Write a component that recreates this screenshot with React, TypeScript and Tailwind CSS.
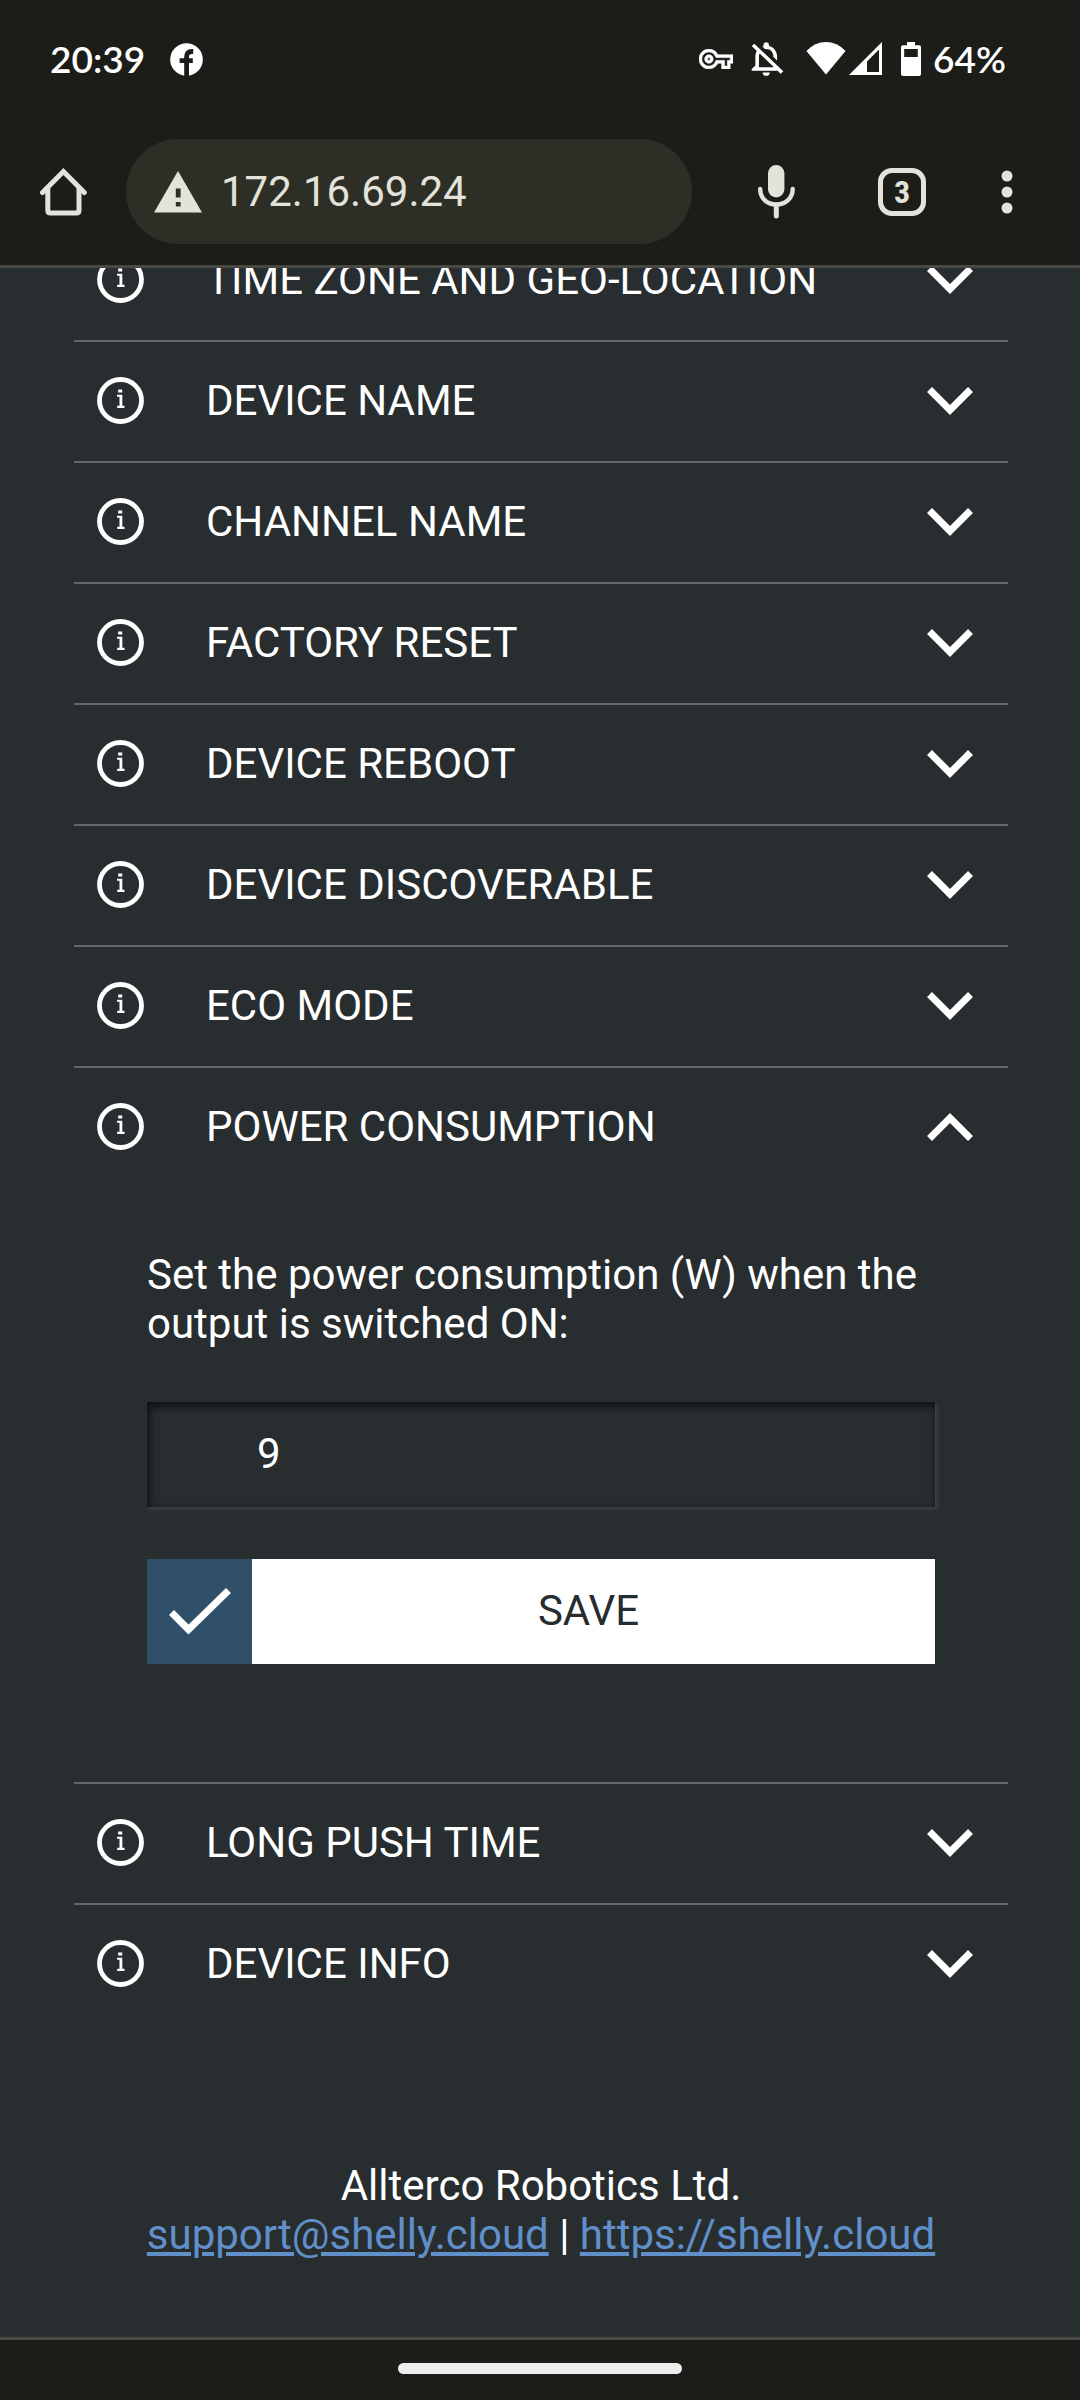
import { useState } from 'react';

function FacebookIcon() {
  return (
    <svg className="h-[33px] w-[33px]" viewBox="0 0 33 33" aria-hidden="true">
      <circle cx="16.5" cy="16.5" r="16.3" fill="#fff" />
      <path d="M16.6 33V13.6q0-5.1 5.2-5.1h1.4M9.6 17.7h13.2" fill="none" stroke="#1c1d18" strokeWidth="4.8" />
    </svg>
  );
}

function KeyIcon() {
  return (
    <svg className="h-5 w-[34px]" viewBox="0 5 24 14" fill="#fff" aria-hidden="true">
      <path d="M22 19h-6v-4h-2.680c-1.140 2.420-3.600 4-6.320 4-3.860 0-7-3.140-7-7s3.140-7 7-7c2.720 0 5.170 1.580 6.320 4H24v6h-2v4zm-4-2h2v-4h2v-2H11.940l-.23-.67C11.010 8.340 9.110 7 7 7c-2.760 0-5 2.240-5 5s2.240 5 5 5c2.110 0 4.010-1.340 4.710-3.330l.23-.67H18v4zM7 15c-1.650 0-3-1.350-3-3s1.350-3 3-3 3 1.350 3 3-1.350 3-3 3zm0-4c-.55 0-1 .45-1 1s.45 1 1 1 1-.45 1-1-.45-1-1-1z" stroke="#fff" strokeWidth="0.4" />
    </svg>
  );
}

function BellOffIcon() {
  return (
    <svg className="ml-[18px] h-[34px] w-[33px]" viewBox="3.6 2.4 18.2 19.7" preserveAspectRatio="none" fill="#fff" aria-hidden="true">
      <path d="M12 22c1.100 0 2-.9 2-2h-4c0 1.100.9 2 2 2zm0-15.500c2.490 0 4 2.020 4 4.500v.1l2 2V11c0-3.070-1.630-5.640-4.500-6.320V4c0-.83-.67-1.500-1.500-1.500s-1.500.67-1.500 1.500v.68c-.24.06-.47.15-.69.23l1.640 1.640c.18-.02.36-.05.55-.05zM5.410 3.350L4 4.760l2.810 2.810C6.290 8.570 6 9.740 6 11v5l-2 2v1h14.240l1.740 1.740 1.410-1.410L5.410 3.350zM16 17H8v-6c0-.68.12-1.320.34-1.900L16 16.760V17z" />
    </svg>
  );
}

function WifiIcon() {
  return (
    <svg className="ml-[22px] h-[34px] w-10" viewBox="0 0 40 34" fill="#fff" aria-hidden="true">
      <path d="M0.4 9Q9 0 20 0t19.600 9L20 32.600z" />
    </svg>
  );
}

function SignalIcon() {
  return (
    <svg className="ml-[3px] h-[34px] w-[33px]" viewBox="0 0 33 34" aria-hidden="true">
      <path d="M0 33 33 0v33zM18 30h12V7.500L18 19.500z" fill="#fff" fillRule="evenodd" />
    </svg>
  );
}

function BatteryIcon() {
  return (
    <svg className="ml-[19px] h-[34px] w-5" viewBox="0 0 20 34" aria-hidden="true">
      <path d="M6 0h8v3.200h4a2 2 0 0 1 2 2V32a2 2 0 0 1-2 2H2a2 2 0 0 1-2-2V5.200a2 2 0 0 1 2-2h4zM3.200 7v8h13.600V7z" fill="#fff" fillRule="evenodd" />
    </svg>
  );
}

function StatusBar() {
  return (
    <div className="flex h-[118px] items-center pl-[50px] pr-[74px] font-['Lato',sans-serif] text-[37px] font-semibold leading-[44px] text-white">
      <span className="mr-auto flex items-center gap-[25px]">
        <span>20:39</span>
        <FacebookIcon />
      </span>
      <KeyIcon />
      <BellOffIcon />
      <WifiIcon />
      <SignalIcon />
      <BatteryIcon />
      <span className="ml-3">64%</span>
    </div>
  );
}

function BrowserToolbar() {
  return (
    <div className="flex h-[147px] items-center pl-[39px] pr-[67px] text-[#e3e3db]">
      <button type="button" aria-label="Home">
        <svg className="h-12 w-12" viewBox="0 0 48 48" fill="none" stroke="currentColor" strokeWidth="5" strokeLinejoin="round" aria-hidden="true">
          <path d="M8.800 20v22.200q0 2.800 2.800 2.800h25.600q2.800 0 2.800-2.800V20" />
          <path d="M3.500 24.500 24.400 3.600 45.300 24.500" strokeLinejoin="miter" strokeLinecap="round" />
        </svg>
      </button>
      <label className="ml-[39px] flex h-[105px] min-w-0 flex-1 items-center rounded-full bg-[#2d2f27] pl-7 pr-7">
        <svg className="h-[42px] w-12 shrink-0" viewBox="0 0 48 42" aria-label="Not secure" role="img">
          <path d="M24 0 48 41.500H0zM21.800 17.500v9h4.800v-9zM21.800 31v4.500h4.800V31z" fill="currentColor" fillRule="evenodd" />
        </svg>
        <input
          aria-label="Address"
          defaultValue="172.16.69.24"
          className="ml-[19px] w-full min-w-0 bg-transparent text-[42px] leading-[49px] outline-none"
        />
      </label>
      <button type="button" aria-label="Voice search" className="ml-[60px]">
        <svg className="h-[54px] w-12" viewBox="0 0 48 54" fill="none" stroke="currentColor" strokeLinecap="round" aria-hidden="true">
          <rect x="16" y="0" width="16.400" height="32.500" rx="8.200" fill="currentColor" stroke="none" />
          <path d="M8.200 24c0 9 6.500 15.500 16 15.500S40.700 33 40.700 24" strokeWidth="4.400" />
          <path d="M24.300 40v11" strokeWidth="5" />
        </svg>
      </button>
      <button
        type="button"
        aria-label="3 open tabs"
        className="ml-[78px] flex h-12 w-12 items-center justify-center rounded-[14px] border-[5px] border-current font-['Roboto_Condensed','Roboto',sans-serif] text-[32px] font-bold leading-none"
      >
        3
      </button>
      <button type="button" aria-label="More options" className="ml-[75px]">
        <svg className="h-11 w-3" viewBox="0 0 12 44" fill="currentColor" aria-hidden="true">
          <circle cx="6" cy="6" r="5.500" />
          <circle cx="6" cy="22" r="5.500" />
          <circle cx="6" cy="38" r="5.500" />
        </svg>
      </button>
    </div>
  );
}

function InfoIcon() {
  return (
    <svg className="h-[47px] w-[47px] shrink-0" viewBox="0 0 47 47" fill="#fff" aria-hidden="true">
      <circle cx="23.500" cy="23.500" r="21" fill="none" stroke="#fff" strokeWidth="4.800" />
      <path d="M21.200 12.500h4v3h-4zM20 17.800h5.300v11h2.200V31h-7.300v-2.200h2.300v-9H20z" />
    </svg>
  );
}

function Chevron({ open }: { open: boolean }) {
  return (
    <svg className="h-7 w-[46px] shrink-0" viewBox="0 0 46 28" fill="none" stroke="#fff" strokeWidth="7" aria-hidden="true">
      <path d={open ? 'M2.500 25.500 23 5 43.500 25.500' : 'M2.500 2.500 23 23 43.500 2.500'} />
    </svg>
  );
}

function PowerConsumptionPanel() {
  return (
    <form className="px-[73px] pb-[118px] pt-[63px]" onSubmit={(event) => event.preventDefault()}>
      <label htmlFor="power" className="block">
        Set the power consumption (W) when the output is switched ON:
      </label>
      <input
        id="power"
        defaultValue="9"
        inputMode="numeric"
        className="mt-[54px] block h-[105px] w-full bg-transparent pb-[2px] pl-[110px] text-white shadow-[inset_2px_4px_10px_rgba(0,0,0,0.7),2px_2px_4px_rgba(255,255,255,0.12)] outline-none"
      />
      <button type="submit" className="mt-[52px] flex h-[105px] w-full bg-white text-[#272c2f]">
        <span className="flex h-full w-[105px] items-center justify-center bg-[#30506a]">
          <svg className="h-[47px] w-[62px]" viewBox="0 0 62 47" fill="none" stroke="#fff" strokeWidth="7" aria-hidden="true">
            <path d="M2.500 24.500 19.500 41.500 59.500 2.500" />
          </svg>
        </span>
        <span className="flex h-full flex-1 items-center justify-center pb-[2px] pr-[10px]">SAVE</span>
      </button>
    </form>
  );
}

const sections = [
  'TIME ZONE AND GEO-LOCATION',
  'DEVICE NAME',
  'CHANNEL NAME',
  'FACTORY RESET',
  'DEVICE REBOOT',
  'DEVICE DISCOVERABLE',
  'ECO MODE',
  'POWER CONSUMPTION',
  'LONG PUSH TIME',
  'DEVICE INFO',
];

export default function App() {
  const [openSection, setOpenSection] = useState('POWER CONSUMPTION');

  return (
    <div className="flex min-h-screen flex-col bg-[#282d2f] font-['Roboto',sans-serif] text-[42px] leading-[49px] text-white">
      <header className="border-b-[3px] border-[#484940] bg-[#1c1d18]">
        <StatusBar />
        <BrowserToolbar />
      </header>

      <main className="flex-1 overflow-hidden pl-[74px] pr-[72px]">
        <ul className="-mt-[47px]">
          {sections.map((title) => {
            const open = title === openSection;
            return (
              <li key={title} className="border-b-2 border-[#62676a] last:border-b-0">
                <button
                  type="button"
                  aria-expanded={open}
                  onClick={() => setOpenSection(open ? '' : title)}
                  className="flex h-[119px] w-full items-center pb-[2px] pl-[23px] pr-[35px] text-left"
                >
                  <InfoIcon />
                  <span className="ml-[62px] flex-1">{title}</span>
                  <Chevron open={open} />
                </button>
                {open && title === 'POWER CONSUMPTION' && <PowerConsumptionPanel />}
              </li>
            );
          })}
        </ul>
      </main>

      <footer className="whitespace-nowrap pb-[78px] pl-[2px] pt-[137px] text-center">
        <p>Allterco Robotics Ltd.</p>
        <p>
          <a href="mailto:support@shelly.cloud" className="text-[#618fc9] underline decoration-4 underline-offset-[3px]">
            support@shelly.cloud
          </a>
          {' | '}
          <a href="https://shelly.cloud" className="text-[#618fc9] underline decoration-4 underline-offset-[3px]">
            https://shelly.cloud
          </a>
        </p>
      </footer>

      <div className="flex h-[63px] items-center justify-center border-t-[3px] border-[#484940] bg-[#1c1d18] pb-1">
        <div className="h-[11px] w-[284px] rounded-full bg-[#ececec]" />
      </div>
    </div>
  );
}
